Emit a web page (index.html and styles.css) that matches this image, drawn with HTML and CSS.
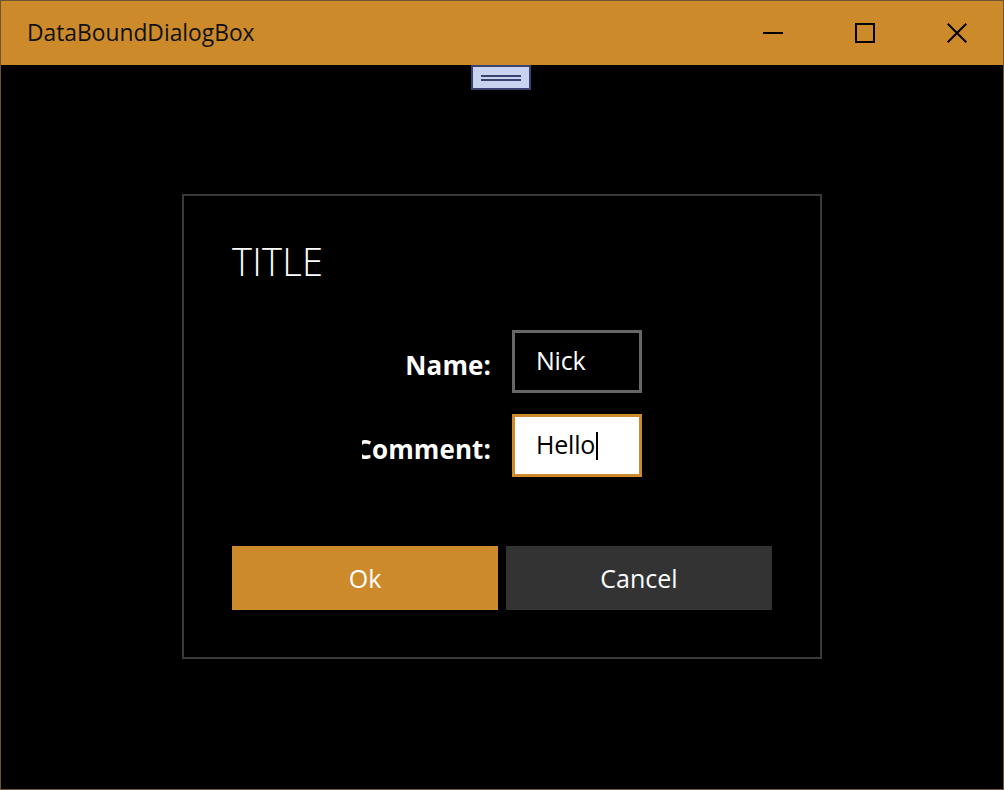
FILE: index.html
```html
<!DOCTYPE html>
<html>
<head>
<meta charset="utf-8">
<link rel="stylesheet" href="styles.css">
</head>
<body>
<div class="window">
  <div class="titlebar">
    <div class="app-title">DataBoundDialogBox</div>
    <div class="caption-buttons">
      <div class="cap-btn">
        <svg width="20" height="20" viewBox="0 0 20 20"><rect x="0" y="9" width="20" height="2" fill="#000"/></svg>
      </div>
      <div class="cap-btn">
        <svg width="20" height="20" viewBox="0 0 20 20"><rect x="1" y="1" width="18" height="18" fill="none" stroke="#000" stroke-width="2"/></svg>
      </div>
      <div class="cap-btn">
        <svg width="20" height="20" viewBox="0 0 20 20"><path d="M0.7 0.7 L19.3 19.3 M19.3 0.7 L0.7 19.3" stroke="#000" stroke-width="2"/></svg>
      </div>
    </div>
  </div>
  <div class="content">
    <div class="grabber">
      <span class="grab-line"></span>
      <span class="grab-line"></span>
    </div>
    <div class="dialog">
      <div class="dialog-title">TITLE</div>
      <div class="form">
        <div class="label"><span>Name:</span></div>
        <div class="textbox">Nick</div>
        <div class="label"><span>Comment:</span></div>
        <div class="textbox focused">Hello<span class="caret"></span></div>
      </div>
      <div class="buttons">
        <div class="btn primary">Ok</div>
        <div class="btn secondary">Cancel</div>
      </div>
    </div>
  </div>
</div>
</body>
</html>
```
FILE: styles.css
```css
* { box-sizing: border-box; }
html, body { margin: 0; padding: 0; background: #000; }
body { font-family: "Open Sans", "Noto Sans", sans-serif; }

.window {
  width: 1004px;
  height: 790px;
  border: 1px solid #6e5530;
  display: flex;
  flex-direction: column;
  background: #000;
}

.titlebar {
  height: 64px;
  background: #cc8a2b;
  display: flex;
  align-items: center;
  justify-content: space-between;
  flex: none;
}

.app-title {
  padding-left: 26px;
  font-size: 22.8px;
  color: #111;
  margin-top: -2px;
}

.caption-buttons {
  display: flex;
  height: 100%;
}

.cap-btn {
  width: 92px;
  height: 100%;
  display: flex;
  align-items: center;
  justify-content: center;
}
.cap-btn svg { display: block; margin-top: -1px; }

.content {
  flex: 1;
  display: flex;
  align-items: center;
  justify-content: center;
  position: relative;
}

.grabber {
  position: absolute;
  top: 0;
  left: 470px;
  width: 60px;
  height: 25px;
  background: #c9d3ef;
  border: 2px solid #3a4272;
  display: flex;
  flex-direction: column;
  align-items: center;
  justify-content: center;
  gap: 2px;
}
.grab-line {
  display: block;
  width: 40px;
  height: 2px;
  background: #3a4272;
}

.dialog {
  width: 640px;
  height: 465px;
  border: 2px solid #3a3a3a;
  padding: 40px 48px 0 48px;
  display: flex;
  flex-direction: column;
  margin-top: -1px;
}

.dialog-title {
  color: #fff;
  font-size: 38px;
  font-weight: 300;
  line-height: 50px;
  height: 50px;
  letter-spacing: 0.3px;
}

.form {
  margin-top: 44px;
  align-self: center;
  display: grid;
  grid-template-columns: 129px 130px;
  column-gap: 21px;
  row-gap: 21px;
}

.label {
  overflow: hidden;
  display: flex;
  justify-content: flex-end;
  align-items: center;
  white-space: nowrap;
  color: #fff;
  font-weight: 700;
  font-size: 26px;
  padding-top: 6px;
  letter-spacing: 0.1px;
}

.textbox {
  height: 63px;
  border: 3px solid #666;
  color: #fff;
  font-size: 25px;
  padding-left: 21px;
  display: flex;
  align-items: center;
  padding-bottom: 4px;
  letter-spacing: -0.2px;
}
.textbox.focused {
  background: #fff;
  border-color: #cc8a2b;
  color: #000;
}
.caret {
  display: inline-block;
  width: 2px;
  height: 28px;
  background: #000;
  margin-left: 1px;
  margin-top: 4px;
}

.buttons {
  margin-top: 69px;
  display: flex;
  gap: 8px;
}
.btn {
  flex: 1;
  height: 64px;
  display: flex;
  align-items: center;
  justify-content: center;
  color: #fff;
  font-size: 25px;
}
.btn.primary { background: #cc8a2b; }
.btn.secondary { background: #333333; }
```
